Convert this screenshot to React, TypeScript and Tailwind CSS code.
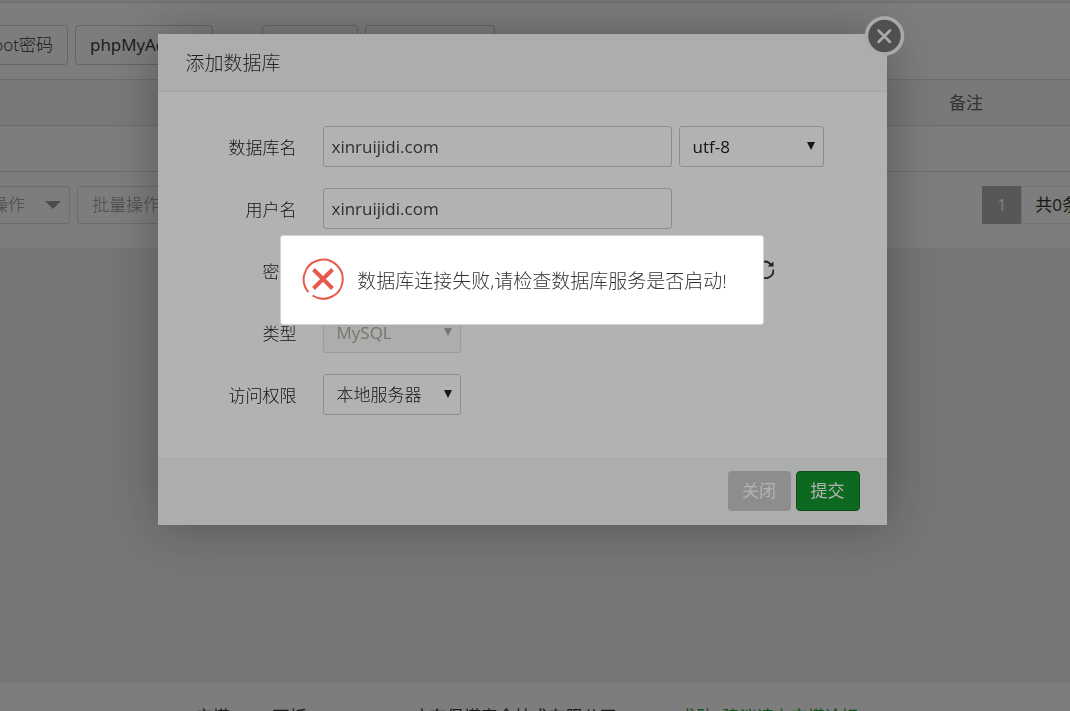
import type { ReactNode } from "react";

const tools = ["同步所有", "从服务器获取"];

function Arrow({ className = "" }: { className?: string }) {
  return (
    <svg
      viewBox="0 0 8 8"
      className={`pointer-events-none absolute top-4 right-[9px] size-2 ${className}`}
      aria-hidden="true"
    >
      <path d="M0 0h8L4 8z" fill="currentColor" />
    </svg>
  );
}

function Row({
  id,
  label,
  children,
}: {
  id: string;
  label: string;
  children: ReactNode;
}) {
  return (
    <div className="flex h-[41px] items-center">
      <label
        htmlFor={id}
        className="mr-[26px] w-[139px] shrink-0 pt-0.5 text-right"
      >
        {label}
      </label>
      <div className="flex items-center gap-[7px]">{children}</div>
    </div>
  );
}

const field =
  "h-[41px] rounded-[3px] border border-[#ccc] bg-white px-2 font-normal text-[#444] outline-none";
const select =
  "h-[41px] w-full appearance-none rounded-[3px] border border-[#ccc] bg-white pr-6 pl-[13px] text-[#222] outline-none";
const toolButton =
  "h-10 shrink-0 rounded border border-[#ccc] whitespace-nowrap";

function Panel() {
  return (
    <div className="flex h-screen flex-col overflow-hidden bg-[#f1f1f1]">
      <main className="mt-[2px] shrink-0 overflow-hidden border-t border-[#ddd] bg-white pb-6">
        <div className="-ml-8 flex pt-[22px]">
          <button
            className={`${toolButton} w-[100px] px-[14px] text-right`}
          >
            root密码
          </button>
          <button
            className={`${toolButton} ml-[7px] w-[138px] px-[14px] text-left font-normal`}
          >
            phpMyAdmin
          </button>
          <div className="ml-[49px] flex gap-[7px]">
            {tools.map((t) => (
              <button key={t} className={`${toolButton} px-[13px]`}>
                {t}
              </button>
            ))}
          </div>
        </div>

        <table className="mt-[14px] w-full table-fixed border-y border-[#ddd]">
          <thead className="bg-[#f6f6f6] text-[#666]">
            <tr className="h-[46px] border-b border-[#ddd]">
              <th className="w-[87%]" />
              <th className="pl-[18px] text-left font-normal">备注</th>
            </tr>
          </thead>
          <tbody>
            <tr className="h-[46px]">
              <td colSpan={2} />
            </tr>
          </tbody>
        </table>

        <div className="-ml-9 flex items-center pt-[14px] text-[#999]">
          <button
            disabled
            className="flex h-[38px] w-[106px] shrink-0 items-center justify-end gap-5 rounded-[3px] border border-[#ddd] pr-2 whitespace-nowrap"
          >
            请选择操作
            <svg viewBox="0 0 16 8" className="h-2 w-4 shrink-0 text-[#999]">
              <path d="M0 0h16L8 8z" fill="currentColor" />
            </svg>
          </button>
          <button
            disabled
            className="ml-[7px] h-[38px] shrink-0 rounded-[3px] border border-[#ddd] px-[14px] whitespace-nowrap"
          >
            批量操作
          </button>
          <div className="-mr-[57px] ml-auto flex shrink-0">
            <span className="flex h-[38px] w-[39px] items-center justify-center bg-[#b2b2b2] font-normal text-white">
              1
            </span>
            <span className="flex h-[38px] items-center border border-[#e6e6e6] px-[13px] font-normal whitespace-nowrap text-[#333]">
              共0条数据
            </span>
          </div>
        </div>
      </main>

      <footer className="mt-auto h-7 shrink-0 overflow-hidden bg-white pt-[22px] pr-4 text-center font-normal whitespace-nowrap">
        宝塔Linux面板 ©2014-2021 广东堡塔安全技术有限公司 (bt.cn){" "}
        <a href="#bbs" className="ml-1 text-[#20a53a]">
          求助|建议请上宝塔论坛
        </a>
      </footer>
    </div>
  );
}

function DatabaseDialog() {
  return (
    <form
      className="relative w-[729px] max-w-full bg-white shadow-[1px_1px_50px_rgba(0,0,0,0.3)]"
      onSubmit={(e) => e.preventDefault()}
    >
      <h2 className="h-[58px] border-b border-[#eee] bg-[#f8f8f8] px-7 text-[19px] leading-[58px]">
        添加数据库
      </h2>
      <button
        type="button"
        aria-label="关闭窗口"
        className="absolute -top-[18px] -right-[18px] size-10"
      >
        <svg viewBox="0 0 40 40" className="size-10">
          <circle cx="19.500" cy="20" r="18" fill="#737373" stroke="#f4f4f4" strokeWidth="3.500" />
          <path
            d="M13.500 14.500l11.500 11.500M25 14.500l-11.500 11.500"
            stroke="#f4f4f4"
            strokeWidth="2.500"
            strokeLinecap="round"
          />
        </svg>
      </button>

      <div className="flex flex-col gap-[21px] pt-[34px] pb-[43px] text-[#222]">
        <Row id="name" label="数据库名">
          <input id="name" className={`${field} w-[349px]`} defaultValue="xinruijidi.com" />
          <div className="relative w-[145px]">
            <select aria-label="编码" className={`${select} font-normal`}>
              <option>utf-8</option>
            </select>
            <Arrow />
          </div>
        </Row>
        <Row id="user" label="用户名">
          <input id="user" className={`${field} w-[349px]`} defaultValue="xinruijidi.com" />
        </Row>
        <Row id="password" label="密码">
          <input id="password" className={`${field} w-[424px]`} />
          <button type="button" aria-label="随机密码">
            <svg viewBox="0 0 20 20" className="-mt-1 size-5" fill="none" stroke="#333" strokeWidth="2">
              <path d="M3.500 8A7.500 7.500 0 0 1 17 6" />
              <path d="M19.500 2.500v5h-6z" fill="#333" stroke="none" />
              <path d="M19.500 10.500A8 8 0 0 1 4.500 15" />
              <path d="M2 18v-5h6z" fill="#333" stroke="none" />
            </svg>
          </button>
        </Row>
        <Row id="type" label="类型">
          <div className="relative w-[138px]">
            <select
              id="type"
              disabled
              className="h-[41px] w-full appearance-none rounded-[3px] border border-[#ddd] bg-[#f8f8f8] pl-[13px] font-normal text-[#a9a998] opacity-100"
            >
              <option>MySQL</option>
            </select>
            <Arrow className="text-[#a9a998]" />
          </div>
        </Row>
        <Row id="access" label="访问权限">
          <div className="relative w-[138px]">
            <select id="access" className={select}>
              <option>本地服务器</option>
            </select>
            <Arrow />
          </div>
        </Row>
      </div>

      <div className="flex h-[67px] items-start justify-end gap-[5px] border-t border-[#edf1f2] bg-[#f6f9f8] pt-3 pr-[27px] font-normal text-white">
        <button type="button" className="h-10 w-[63px] rounded bg-[#cbcbcb]">
          关闭
        </button>
        <button className="h-10 w-16 rounded border border-[#1a6b25] bg-[#10982d]">
          提交
        </button>
      </div>
    </form>
  );
}

function ErrorToast() {
  return (
    <div
      role="alert"
      className="flex h-[90px] items-start gap-[13px] rounded-[3px] border border-[#d3d3d3] bg-white pt-[22px] pr-9 pl-[21px] text-[19px] leading-[46px]"
    >
      <svg viewBox="0 0 42 42" className="size-[42px] shrink-0" fill="none" stroke="#e9594b">
        <path d="M6.500 34A19.500 19.500 0 1 1 10.500 37.500" strokeWidth="2" />
        <path d="M11.500 11.500l19 19M30.500 11.500l-19 19" strokeWidth="4" />
      </svg>
      数据库连接失败,请检查数据库服务是否启动!
    </div>
  );
}

export default function App() {
  return (
    <div className="font-['Open_Sans','Noto_Sans_CJK_SC',sans-serif] text-[17px] leading-6 font-light text-[#333]">
      <Panel />
      <div className="fixed inset-0 flex items-start justify-center bg-black/30 pt-[34px] pr-[26px]">
        <DatabaseDialog />
      </div>
      <div className="fixed inset-0 flex items-start justify-center bg-black/30 pt-[235px] pr-[26px]">
        <ErrorToast />
      </div>
    </div>
  );
}
